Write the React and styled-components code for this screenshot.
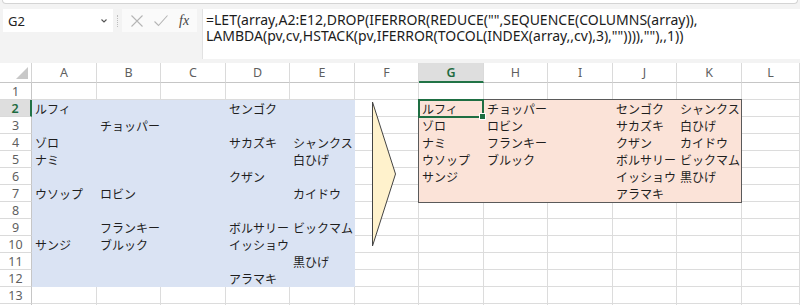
import React from "react";
import styled, { createGlobalStyle } from "styled-components";

const Global = createGlobalStyle`
  html, body { margin: 0; padding: 0; background: #ffffff; }
  body { width: 800px; height: 305px; overflow: hidden; font-family: "Noto Sans", "Noto Sans CJK JP", sans-serif; }
`;

const Page = styled.div`
  width: 800px;
  height: 305px;
  overflow: hidden;
  background: #f3f3f3;
  display: flex;
  flex-direction: column;
`;

const RibbonEdge = styled.div`
  flex: none;
  height: 3px;
  margin: 0 2px;
  background: #ffffff;
  border: 1px solid #d4d4d4;
  border-top: none;
  border-radius: 0 0 6px 6px;
`;

const FormulaBar = styled.div`
  flex: none;
  height: 55px;
  display: flex;
  align-items: flex-start;
  padding: 5px 0 0 3px;
  box-sizing: border-box;
`;

const NameBox = styled.div`
  width: 110px;
  height: 23px;
  background: #ffffff;
  display: flex;
  align-items: center;
  justify-content: space-between;
  padding: 0 5px 0 5px;
  box-sizing: border-box;
  font-size: 13px;
  color: #222;
`;

const Separator = styled.div`
  width: 9px;
  height: 23px;
  display: flex;
  align-items: center;
  justify-content: center;
  &::after {
    content: "";
    width: 1px;
    height: 12px;
    border-left: 1px dotted #bdbdbd;
  }
`;

const ButtonBox = styled.div`
  width: 75px;
  height: 23px;
  background: #fafafa;
  display: flex;
  align-items: center;
  justify-content: space-around;
  padding: 0 3px;
  box-sizing: border-box;
`;

const Fx = styled.span`
  font-family: "Liberation Serif", serif;
  font-style: italic;
  font-size: 14px;
  color: #444;
`;

const FormulaBox = styled.div`
  flex: 1;
  margin-left: 5px;
  height: 50px;
  background: #ffffff;
  border-left: 1px solid #e2e2e2;
  padding: 3px 0 0 3px;
  box-sizing: border-box;
  font-size: 14px;
  line-height: 16px;
  color: #1c1c1c;
  white-space: pre;
`;

const Sheet = styled.div`
  flex: none;
  margin-top: 4px;
  display: grid;
  grid-template-columns: 32px 65px 64px 65px 64px 65px 64px 65px 64px 65px 64px 65px 58px;
  grid-template-rows: 20px repeat(14, 17px);
  background: #ffffff;
`;

const Corner = styled.div`
  grid-column: 1;
  grid-row: 1;
  position: relative;
  border-right: 1px solid #d4d4d4;
  border-bottom: 1px solid #c6c6c6;
  box-sizing: border-box;
  &::after {
    content: "";
    position: absolute;
    right: 3px;
    bottom: 3px;
    width: 0;
    height: 0;
    border-left: 12px solid transparent;
    border-bottom: 12px solid #c8c8c8;
  }
`;

const ColHead = styled.div`
  grid-row: 1;
  grid-column: ${(p) => p.$col};
  box-sizing: border-box;
  display: flex;
  align-items: center;
  justify-content: center;
  font-size: 12.5px;
  color: ${(p) => (p.$active ? "#1d6b40" : "#5f5f5f")};
  background: ${(p) => (p.$active ? "#dedede" : "#ffffff")};
  border-right: 1px solid #dadada;
  border-bottom: ${(p) => (p.$active ? "2px solid #217346" : "1px solid #c6c6c6")};
  font-weight: ${(p) => (p.$active ? 600 : 400)};
`;

const RowHead = styled.div`
  grid-column: 1;
  grid-row: ${(p) => p.$row};
  box-sizing: border-box;
  display: flex;
  align-items: center;
  justify-content: center;
  font-size: 12.5px;
  color: ${(p) => (p.$active ? "#1d6b40" : "#5f5f5f")};
  background: ${(p) => (p.$active ? "#dedede" : "#ffffff")};
  border-right: ${(p) => (p.$active ? "2px solid #217346" : "1px solid #c6c6c6")};
  border-bottom: 1px solid #dadada;
  font-weight: ${(p) => (p.$active ? 600 : 400)};
`;

const Cell = styled.div`
  grid-column: ${(p) => p.$col};
  grid-row: ${(p) => p.$row};
  box-sizing: border-box;
  background: ${(p) => p.$fill || "#ffffff"};
  border-right: 1px solid ${(p) => p.$fill || "#dcdcdc"};
  border-bottom: 1px solid ${(p) => p.$fill || "#dcdcdc"};
  font-family: "Noto Sans CJK JP", "Noto Sans", sans-serif;
  font-size: 12px;
  line-height: 17px;
  color: #1e1e1e;
  padding-left: 3px;
  white-space: nowrap;
  overflow: hidden;
`;

const RangeFrame = styled.div`
  grid-column: 8 / 13;
  grid-row: 3 / 9;
  border: 1px solid #5a5a5a;
  margin: -1px 0 -1px -1px;
  pointer-events: none;
  z-index: 2;
`;

const ActiveCell = styled.div`
  grid-column: 8;
  grid-row: 3;
  border: 2px solid #1e6e42;
  margin: -1px 0 -1px -1px;
  pointer-events: none;
  position: relative;
  z-index: 3;
  &::after {
    content: "";
    position: absolute;
    right: -4px;
    bottom: -4px;
    width: 5px;
    height: 5px;
    background: #1e6e42;
    border: 1px solid #ffffff;
  }
`;

const ArrowArea = styled.div`
  grid-column: 7;
  grid-row: 3 / 12;
  z-index: 2;
  pointer-events: none;
`;

const BLUE = "#dae3f3";
const ORANGE = "#fbe3d8";

const COLS = ["A", "B", "C", "D", "E", "F", "G", "H", "I", "J", "K", "L"];

const blueData = {
  2: { A: "ルフィ", D: "センゴク" },
  3: { B: "チョッパー" },
  4: { A: "ゾロ", D: "サカズキ", E: "シャンクス" },
  5: { A: "ナミ", E: "白ひげ" },
  6: { D: "クザン" },
  7: { A: "ウソップ", B: "ロビン", E: "カイドウ" },
  9: { B: "フランキー", D: "ボルサリー", E: "ビックマム" },
  10: { A: "サンジ", B: "ブルック", D: "イッショウ" },
  11: { E: "黒ひげ" },
  12: { D: "アラマキ" },
};

const resultCols = {
  G: ["ルフィ", "ゾロ", "ナミ", "ウソップ", "サンジ"],
  H: ["チョッパー", "ロビン", "フランキー", "ブルック"],
  I: [],
  J: ["センゴク", "サカズキ", "クザン", "ボルサリー", "イッショウ", "アラマキ"],
  K: ["シャンクス", "白ひげ", "カイドウ", "ビックマム", "黒ひげ"],
};

function cellContent(row, col) {
  const inBlue = row >= 2 && row <= 12 && "ABCDE".includes(col);
  const inOrange = row >= 2 && row <= 7 && "GHIJK".includes(col);
  if (inBlue) {
    return { fill: BLUE, text: (blueData[row] && blueData[row][col]) || "" };
  }
  if (inOrange) {
    return { fill: ORANGE, text: resultCols[col][row - 2] || "" };
  }
  return { fill: null, text: "" };
}

const XIcon = () => (
  <svg width="14" height="14" viewBox="0 0 14 14">
    <path d="M1.5 1.5 L12.5 12.5 M12.5 1.5 L1.5 12.5" stroke="#b5b5b5" strokeWidth="1.1" fill="none" />
  </svg>
);

const CheckIcon = () => (
  <svg width="16" height="14" viewBox="0 0 16 14">
    <path d="M1.5 7.5 L5.5 11.5 L14.5 1.5" stroke="#b5b5b5" strokeWidth="1.1" fill="none" />
  </svg>
);

const Chevron = () => (
  <svg width="8" height="6" viewBox="0 0 8 6">
    <path d="M1.5 1.5 L4 4 L6.5 1.5" stroke="#555" strokeWidth="1.1" fill="none" />
  </svg>
);

const VISIBLE_LABELS = 13;

export default function App() {
  const rows = Array.from({ length: 14 }, (_, i) => i + 1);
  return (
    <Page>
      <Global />
      <RibbonEdge />
      <FormulaBar>
        <NameBox>
          <span>G2</span>
          <Chevron />
        </NameBox>
        <Separator />
        <ButtonBox>
          <XIcon />
          <CheckIcon />
          <Fx>fx</Fx>
        </ButtonBox>
        <FormulaBox>
          {'=LET(array,A2:E12,DROP(IFERROR(REDUCE("",SEQUENCE(COLUMNS(array)),\nLAMBDA(pv,cv,HSTACK(pv,IFERROR(TOCOL(INDEX(array,,cv),3),"")))),""),,1))'}
        </FormulaBox>
      </FormulaBar>
      <Sheet>
        <Corner />
        {COLS.map((c, ci) => (
          <ColHead key={c} $col={ci + 2} $active={c === "G"}>
            {c}
          </ColHead>
        ))}
        {rows.map((r) => (
          <React.Fragment key={r}>
            <RowHead $row={r + 1} $active={r === 2}>
              {r <= VISIBLE_LABELS ? r : ""}
            </RowHead>
            {COLS.map((c, ci) => {
              const d = cellContent(r, c);
              return (
                <Cell key={c} $row={r + 1} $col={ci + 2} $fill={d.fill}>
                  {d.text}
                </Cell>
              );
            })}
          </React.Fragment>
        ))}
        <ArrowArea>
          <svg width="64" height="153" viewBox="0 0 64 153">
            <polygon points="17.5,2 40.5,74 17.5,146" fill="#fff2cc" stroke="#444" strokeWidth="1" />
          </svg>
        </ArrowArea>
        <RangeFrame />
        <ActiveCell />
      </Sheet>
    </Page>
  );
}
